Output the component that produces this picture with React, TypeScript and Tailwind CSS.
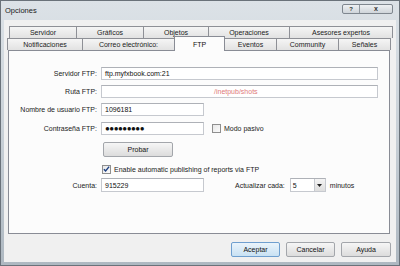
import React from "react";

const font = "font-['Liberation_Sans',Arial,sans-serif]";

// back row and front row of the multi-row tab strip
const rowBack = [
  { label: "Servidor", w: "w-[68px]" },
  { label: "Gráficos", w: "w-[68px]" },
  { label: "Objetos", w: "w-[66px]" },
  { label: "Operaciones", w: "w-[82px]" },
  { label: "Asesores expertos", w: "w-[104px]" },
];

const rowFront = [
  { label: "Notificaciones", w: "w-[76px]" },
  { label: "Correo electrónico:", w: "w-[93px]" },
  { label: "FTP", w: "w-[51px]", active: true },
  { label: "Eventos", w: "w-[53px]" },
  { label: "Community", w: "w-[63px]" },
  { label: "Señales", w: "w-[53px]" },
];

function Tab({ label, w, active, first }: { label: string; w: string; active?: boolean; first?: boolean }) {
  if (active) {
    return (
      <div
        className={`${w} h-[15px] -mb-px relative z-10 flex items-center justify-center bg-[#fcfcfc] border border-b-0 border-[#898c95] ${first ? "" : "-ml-px"} text-[#111]`}
      >
        {label}
      </div>
    );
  }
  return (
    <div
      className={`${w} h-[12px] flex items-center justify-center bg-gradient-to-b from-[#f5f5f5] to-[#e2e2e2] border border-b-0 border-[#8e9096] ${first ? "" : "-ml-px"} text-[#1b1b1b]`}
    >
      {label}
    </div>
  );
}

function TextBox({ w, children }: { w: string; children?: React.ReactNode }) {
  return (
    <div className={`${w} h-[13px] flex items-center bg-white border border-[#c6c9cf] border-t-[#aeb1b7] px-[3px] text-[#111]`}>
      {children}
    </div>
  );
}

function Label({ children }: { children: React.ReactNode }) {
  return <div className="w-[88px] text-right text-[#222]">{children}</div>;
}

function Check({ checked }: { checked?: boolean }) {
  return (
    <div className="w-[9px] h-[9px] border border-[#8f8f8f] bg-gradient-to-br from-[#e8e8e8] to-[#fbfbfb] flex items-center justify-center">
      {checked && (
        <svg width="8" height="8" viewBox="0 0 8 8">
          <path d="M1 4.2 L3 6.3 L7 1.3" fill="none" stroke="#1c3f82" strokeWidth="1.6" />
        </svg>
      )}
    </div>
  );
}

function Btn({ children, def, w }: { children: React.ReactNode; def?: boolean; w: string }) {
  return (
    <div
      className={`${w} h-[15px] flex items-center justify-center rounded-[2px] border ${
        def
          ? "border-[#6f9fcf] bg-gradient-to-b from-[#eaf4fb] to-[#c9e1f3]"
          : "border-[#a3a6ab] bg-gradient-to-b from-[#f6f6f6] to-[#dcdcdc]"
      } text-[#111]`}
    >
      {children}
    </div>
  );
}

export default function App() {
  return (
    <div className={`${font} text-[7px] leading-none w-[400px] h-[266px] overflow-hidden flex flex-col bg-gradient-to-b from-[#dce2e7] via-[#c8d0d7] to-[#aeb8c1] border border-[#6a727a]`}>
      {/* Title bar */}
      <div className="h-[19px] flex items-center pl-[4px] pr-[6px]">
        <span className="text-[7.5px] text-[#1a1a1a]">Opciones</span>
        <div className="ml-auto mb-[4px] flex h-[10px] rounded-[2px] border border-[#7f878f] bg-gradient-to-b from-[#eef1f3] to-[#cfd5da] overflow-hidden">
          <div className="w-[17px] flex items-center justify-center border-r border-[#8f979e] text-[6px] font-bold text-[#333]">?</div>
          <div className="w-[32px] flex items-center justify-center text-[7px] font-bold text-[#333]">x</div>
        </div>
      </div>

      {/* Client area */}
      <div className="mx-[3px] h-[242px] bg-[#f0f0f0] flex flex-col">
        {/* Tab strip */}
        <div className="pt-[6px]">
          <div className="flex pl-[5px]">
            {rowBack.map((t, i) => (
              <Tab key={t.label} label={t.label} w={t.w} first={i === 0} />
            ))}
          </div>
          <div className="flex items-end h-[12px] pl-[3px]">
            {rowFront.map((t, i) => (
              <Tab key={t.label} label={t.label} w={t.w} active={t.active} first={i === 0} />
            ))}
          </div>
        </div>

        {/* Tab panel */}
        <div className="ml-[4px] w-[382px] h-[184px] bg-[#fcfcfc] border border-[#898c95] flex flex-col pt-[16px]">
          <div className="flex items-center">
            <Label>Servidor FTP:</Label>
            <div className="ml-[4px]">
              <TextBox w="w-[277px]">ftp.myfxbook.com:21</TextBox>
            </div>
          </div>

          <div className="flex items-center mt-[5px]">
            <Label>Ruta FTP:</Label>
            <div className="ml-[4px]">
              <TextBox w="w-[277px]">
                <span className="ml-[109px] text-[#e07a7a]">/inetpub/shots</span>
              </TextBox>
            </div>
          </div>

          <div className="flex items-center mt-[5px]">
            <Label>Nombre de usuario FTP:</Label>
            <div className="ml-[4px]">
              <TextBox w="w-[103px]">1096181</TextBox>
            </div>
          </div>

          <div className="flex items-center mt-[6px]">
            <Label>Contraseña FTP:</Label>
            <div className="ml-[4px]">
              <TextBox w="w-[103px]">
                <span className="text-[8px] tracking-[-0.5px] text-[#111]">●●●●●●●●●</span>
              </TextBox>
            </div>
            <div className="ml-[8px]">
              <Check />
            </div>
            <span className="ml-[3px] text-[#222]">Modo pasivo</span>
          </div>

          <div className="flex mt-[7px] pl-[94px]">
            <Btn w="w-[70px]">Probar</Btn>
          </div>

          <div className="flex items-center mt-[7px] pl-[93px] h-[10px]">
            <Check checked />
            <span className="ml-[3px] text-[#222]">Enable automatic publishing of reports via FTP</span>
          </div>

          <div className="flex items-center mt-[4px]">
            <Label>Cuenta:</Label>
            <div className="ml-[4px]">
              <div className="w-[103px] h-[14px] flex items-center bg-white border border-[#c6c9cf] border-t-[#aeb1b7] px-[3px] text-[#111]">
                915229
              </div>
            </div>
            <span className="ml-[31px] text-[#222]">Actualizar cada:</span>
            <div className="ml-[5px] w-[36px] h-[14px] flex items-center bg-white border border-[#c6c9cf] border-t-[#aeb1b7]">
              <span className="pl-[2px] flex-1 text-[#111]">5</span>
              <div className="w-[11px] h-full flex items-center justify-center bg-gradient-to-b from-[#f4f4f4] to-[#dedede] border-l border-[#c6c9cf]">
                <svg width="5" height="3" viewBox="0 0 5 3">
                  <path d="M0 0 H5 L2.5 3 Z" fill="#222" />
                </svg>
              </div>
            </div>
            <span className="ml-[4px] text-[#222]">minutos</span>
          </div>
        </div>

        {/* Dialog buttons */}
        <div className="flex justify-end gap-[6px] pr-[5px] mt-[8px]">
          <Btn w="w-[49px]" def>
            Aceptar
          </Btn>
          <Btn w="w-[49px]">Cancelar</Btn>
          <Btn w="w-[50px]">Ayuda</Btn>
        </div>
      </div>
    </div>
  );
}
